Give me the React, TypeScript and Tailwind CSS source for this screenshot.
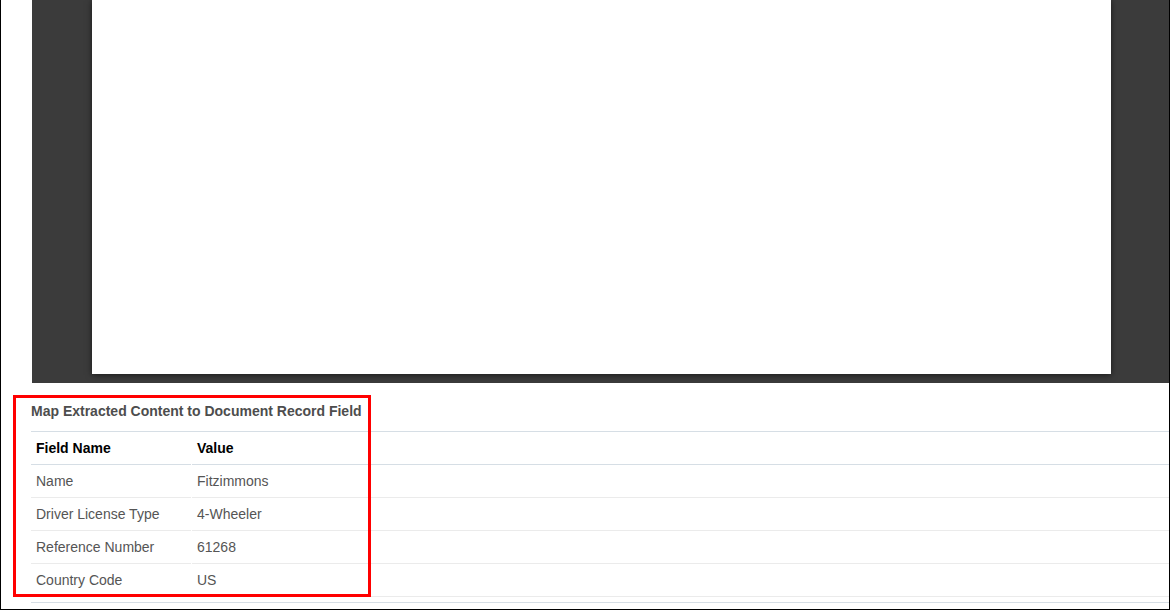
import React from "react";

// Rows mapped from the extracted document
const rows = [
  { field: "Name", value: "Fitzimmons" },
  { field: "Driver License Type", value: "4-Wheeler" },
  { field: "Reference Number", value: "61268" },
  { field: "Country Code", value: "US" },
];

export default function App() {
  return (
    <div
      className="relative w-[1170px] h-[610px] bg-white border-x border-b border-black overflow-hidden"
      style={{ fontFamily: '"Liberation Sans", Arial, sans-serif' }}
    >
      {/* --- DOCUMENT VIEWER --- */}
      <div className="ml-[31px] h-[383px] bg-[#3b3b3b] overflow-hidden">
        <div className="ml-[60px] w-[1019px] h-[374px] bg-white shadow-[0_1px_6px_rgba(0,0,0,0.6)]" />
      </div>

      {/* --- MAPPING TABLE --- */}
      <div className="ml-[30px]">
        <div className="pt-[20px] pb-[12px] leading-[16px] text-[14px] font-bold text-[#4d4d4d] border-b border-[#d6dee5]">
          Map Extracted Content to Document Record Field
        </div>

        <div className="flex h-[33px] text-[14px] font-bold text-black">
          <div className="w-[160px] pl-[5px] flex items-center border-b border-[#d6dee5]">Field Name</div>
          <div className="w-px" />
          <div className="flex-1 pl-[5px] flex items-center border-b border-[#d6dee5]">Value</div>
        </div>

        {rows.map((row) => (
          <div key={row.field} className="flex h-[33px] text-[14px] text-[#555]">
            <div className="w-[160px] pl-[5px] flex items-center border-b border-[#ebebeb]">{row.field}</div>
            <div className="w-px" />
            <div className="flex-1 pl-[5px] flex items-center border-b border-[#ebebeb]">{row.value}</div>
          </div>
        ))}

        <div className="h-[6px] border-b border-[#d6dee5]" />
      </div>

      {/* highlight annotation */}
      <div className="absolute left-[12px] top-[395px] w-[358px] h-[202px] border-[3px] border-[#ff0000] pointer-events-none" />
    </div>
  );
}
